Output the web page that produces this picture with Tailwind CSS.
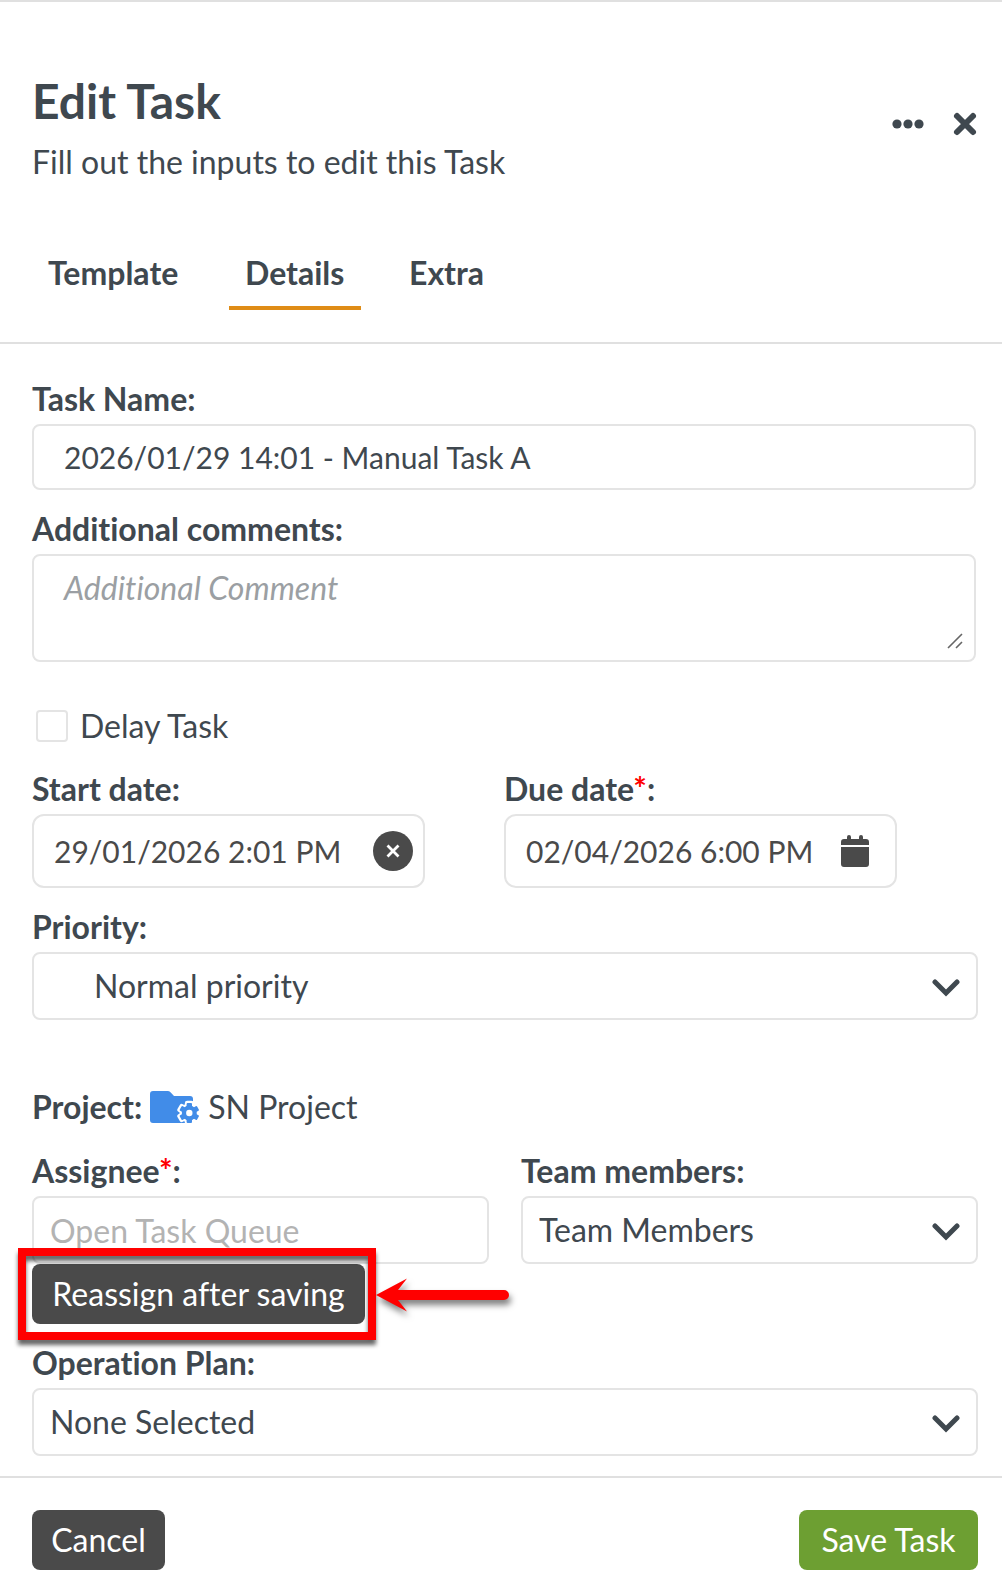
<!DOCTYPE html>
<html lang="en">
<head>
  <meta charset="UTF-8">
  <meta name="viewport" content="width=device-width, initial-scale=1.0">
  <title>Edit Task</title>
  <script src="https://cdn.jsdelivr.net/npm/@tailwindcss/browser@4"></script>
</head>
<body class="bg-white text-[#3f484f] font-['Lato','Open_Sans',sans-serif] text-[32px] leading-10 [font-variant-ligatures:none]">
  <div class="min-h-screen flex flex-col border-t-2 border-[#e0e0e0]">

    <!-- Header -->
    <header class="flex justify-between items-start pl-8 pr-6 pt-[68px]">
      <div>
        <h1 class="text-5xl leading-[62px] font-bold">Edit Task</h1>
        <p class="pt-2.5">Fill out the inputs to edit this Task</p>
      </div>
      <div class="flex items-center gap-7 pt-[38px]">
        <button type="button" aria-label="More options">
          <svg class="block w-8 h-8" viewBox="0 0 32 32" fill="currentColor">
            <circle cx="5" cy="16" r="4.6"/><circle cx="16" cy="16" r="4.6"/><circle cx="27" cy="16" r="4.6"/>
          </svg>
        </button>
        <button type="button" aria-label="Close">
          <svg class="block w-[26px] h-[26px]" viewBox="0 0 26 26" fill="none" stroke="currentColor" stroke-width="6" stroke-linecap="round">
            <path d="M5 5l16 16M21 5L5 21"/>
          </svg>
        </button>
      </div>
    </header>

    <!-- Tabs -->
    <nav class="flex gap-8 px-8 pt-[71px] pb-8 border-b-2 border-[#e0e0e0] font-bold">
      <a href="#template" class="min-w-[165px] px-4 pb-[13px] border-b-4 border-transparent">Template</a>
      <a href="#details" class="min-w-[132px] px-4 pb-[13px] border-b-4 border-[#df8c16]" aria-current="page">Details</a>
      <a href="#extra" class="px-4 pb-[13px] border-b-4 border-transparent">Extra</a>
    </nav>

    <!-- Form -->
    <form id="taskForm" class="flex-1 pl-8 pr-6 pt-4 pb-5">
      <div class="pt-[19px] pr-0.5">
        <label for="taskName" class="block mb-[5px] font-bold">Task Name:</label>
        <input id="taskName" type="text" value="2026/01/29 14:01 - Manual Task A"
          class="block w-full h-[66px] px-[30px] border-2 border-[#e4e4e4] rounded-lg text-3xl">
      </div>

      <div class="pt-[19px] pr-0.5">
        <label for="comments" class="block mb-[5px] font-bold">Additional comments:</label>
        <div class="relative">
          <textarea id="comments" placeholder="Additional Comment"
            class="block w-full h-[108px] px-[30px] py-3 border-2 border-[#e4e4e4] rounded-lg resize-none placeholder:italic placeholder:text-[#9b9fa3]"></textarea>
          <svg class="absolute right-[13px] bottom-[13px] w-4 h-4 text-[#666]" viewBox="0 0 16 16" fill="none" stroke="currentColor" stroke-width="1.6">
            <path d="M1 15L15 1M9 15l6-6"/>
          </svg>
        </div>
      </div>

      <div class="flex items-center gap-3 pl-1 pt-11 pb-1">
        <input id="delayTask" type="checkbox" class="appearance-none w-8 h-8 border-2 border-[#e4e4e4] rounded checked:bg-[#3f484f]">
        <label for="delayTask">Delay Task</label>
      </div>

      <div class="grid grid-cols-2 pr-0.5">
        <div class="pt-[19px]">
          <label for="startDate" class="block mb-[5px] font-bold">Start date:</label>
          <div class="flex items-center justify-between w-5/6 h-[74px] pl-5 pr-2.5 border-2 border-[#e4e4e4] rounded-xl text-[#4a4a4a]">
            <input id="startDate" type="text" value="29/01/2026 2:01 PM" class="min-w-0 flex-1 text-3xl">
            <button type="button" aria-label="Clear start date">
              <svg class="block w-10 h-10" viewBox="0 0 40 40">
                <circle cx="20" cy="20" r="20" fill="#4a4a4a"/>
                <path d="M14.5 14.5l11 11M25.5 14.5l-11 11" stroke="#fff" stroke-width="2.8"/>
              </svg>
            </button>
          </div>
        </div>
        <div class="pt-[19px]">
          <label for="dueDate" class="block mb-[5px] font-bold">Due date<span class="text-[#f00]">*</span>:</label>
          <div class="flex items-center justify-between w-5/6 h-[74px] pl-5 pr-[26px] border-2 border-[#e4e4e4] rounded-xl text-[#4a4a4a]">
            <input id="dueDate" type="text" value="02/04/2026 6:00 PM" class="min-w-0 flex-1 text-3xl">
            <button type="button" aria-label="Pick due date">
              <svg class="block w-7 h-8" viewBox="0 0 28 32" fill="currentColor">
                <path d="M0 10V7a3 3 0 0 1 3-3h3V2a2 2 0 0 1 4 0v2h8V2a2 2 0 0 1 4 0v2h3a3 3 0 0 1 3 3v3zM0 12h28v17a3 3 0 0 1-3 3H3a3 3 0 0 1-3-3z"/>
              </svg>
            </button>
          </div>
        </div>
      </div>

      <div class="pt-[19px]">
        <label for="priority" class="block mb-[5px] font-bold">Priority:</label>
        <div class="relative">
          <select id="priority" class="block appearance-none w-full h-[68px] pl-[60px] pr-16 border-2 border-[#e4e4e4] rounded-lg">
            <option>Normal priority</option>
          </select>
          <svg class="absolute right-[18px] top-[27px] w-7 h-[18px] pointer-events-none" viewBox="0 0 28 18" fill="none" stroke="currentColor" stroke-width="5" stroke-linecap="round">
            <path d="M3 3l11 11L25 3"/>
          </svg>
        </div>
      </div>

      <div class="flex items-center pt-[67px] mb-[5px]">
        <span class="font-bold">Project:</span>
        <svg class="w-[50px] h-8 mx-2" viewBox="0 0 50 32">
          <path d="M3 0h14.500a4 4 0 0 1 3 1.300L24 5h16a3 3 0 0 1 3 3v24H3a3 3 0 0 1-3-3V3a3 3 0 0 1 3-3z" fill="#418ce8"/>
          <g transform="translate(39.300 22)">
            <g fill="#fff" stroke="#fff" stroke-width="4.500" stroke-linejoin="round">
              <circle r="7.500"/>
              <path d="M-2.200-10h4.400v20h-4.400z"/>
              <path d="M-2.200-10h4.400v20h-4.400z" transform="rotate(60)"/>
              <path d="M-2.200-10h4.400v20h-4.400z" transform="rotate(120)"/>
            </g>
            <g fill="#418ce8">
              <circle r="7.500"/>
              <rect x="-2.700" y="-10" width="5.400" height="20" rx="1"/>
              <rect x="-2.700" y="-10" width="5.400" height="20" rx="1" transform="rotate(60)"/>
              <rect x="-2.700" y="-10" width="5.400" height="20" rx="1" transform="rotate(120)"/>
            </g>
            <circle r="3.200" fill="#fff"/>
          </g>
        </svg>
        <span>SN Project</span>
      </div>

      <div class="grid grid-cols-2 gap-8">
        <div class="pt-[19px]">
          <label for="assignee" class="block mb-[5px] font-bold">Assignee<span class="text-[#f00]">*</span>:</label>
          <input id="assignee" type="text" placeholder="Open Task Queue"
            class="block w-full h-[68px] px-4 border-2 border-[#e4e4e4] rounded-lg placeholder:text-[#b3b3b3]">
          <div class="relative w-fit">
            <button type="button" class="block h-[60px] min-w-[333px] px-[18px] rounded-lg bg-[#4a4a4a] text-white whitespace-nowrap">Reassign after saving</button>
            <!-- callout frame and arrow -->
            <div class="absolute -left-3.5 -right-[11px] -inset-y-4 border-8 border-[#f00] pointer-events-none drop-shadow-[0_5px_2px_rgba(0,0,0,0.6)]"></div>
            <svg class="absolute left-full top-3 ml-[11px] w-[133px] h-[38px] overflow-visible pointer-events-none drop-shadow-[2px_5px_3px_rgba(0,0,0,0.5)]" viewBox="0 0 133 38" fill="#f00">
              <path d="M0 19L31 2.500 22 14h106a5 5 0 0 1 0 10H22l9 11.500z"/>
            </svg>
          </div>
        </div>
        <div class="pt-[19px]">
          <label for="members" class="block mb-[5px] font-bold">Team members:</label>
          <div class="relative">
            <select id="members" class="block appearance-none w-full h-[68px] pl-4 pr-16 border-2 border-[#e4e4e4] rounded-lg">
              <option>Team Members</option>
            </select>
            <svg class="absolute right-[18px] top-[27px] w-7 h-[18px] pointer-events-none" viewBox="0 0 28 18" fill="none" stroke="currentColor" stroke-width="5" stroke-linecap="round">
              <path d="M3 3l11 11L25 3"/>
            </svg>
          </div>
        </div>
      </div>

      <div class="pt-[19px]">
        <label for="plan" class="block mb-[5px] font-bold">Operation Plan:</label>
        <div class="relative">
          <select id="plan" class="block appearance-none w-full h-[68px] pl-4 pr-16 border-2 border-[#e4e4e4] rounded-lg">
            <option>None Selected</option>
          </select>
          <svg class="absolute right-[18px] top-[27px] w-7 h-[18px] pointer-events-none" viewBox="0 0 28 18" fill="none" stroke="currentColor" stroke-width="5" stroke-linecap="round">
            <path d="M3 3l11 11L25 3"/>
          </svg>
        </div>
      </div>
    </form>

    <!-- Footer -->
    <footer class="flex justify-between pl-8 pr-6 pt-8 pb-6 border-t-2 border-[#e0e0e0] text-white">
      <button type="button" class="h-[60px] min-w-[133px] px-[18px] rounded-lg bg-[#4a4a4a]">Cancel</button>
      <button type="submit" form="taskForm" class="h-[60px] min-w-[179px] px-[18px] rounded-lg bg-[#6d9f32]">Save Task</button>
    </footer>
  </div>
</body>
</html>
